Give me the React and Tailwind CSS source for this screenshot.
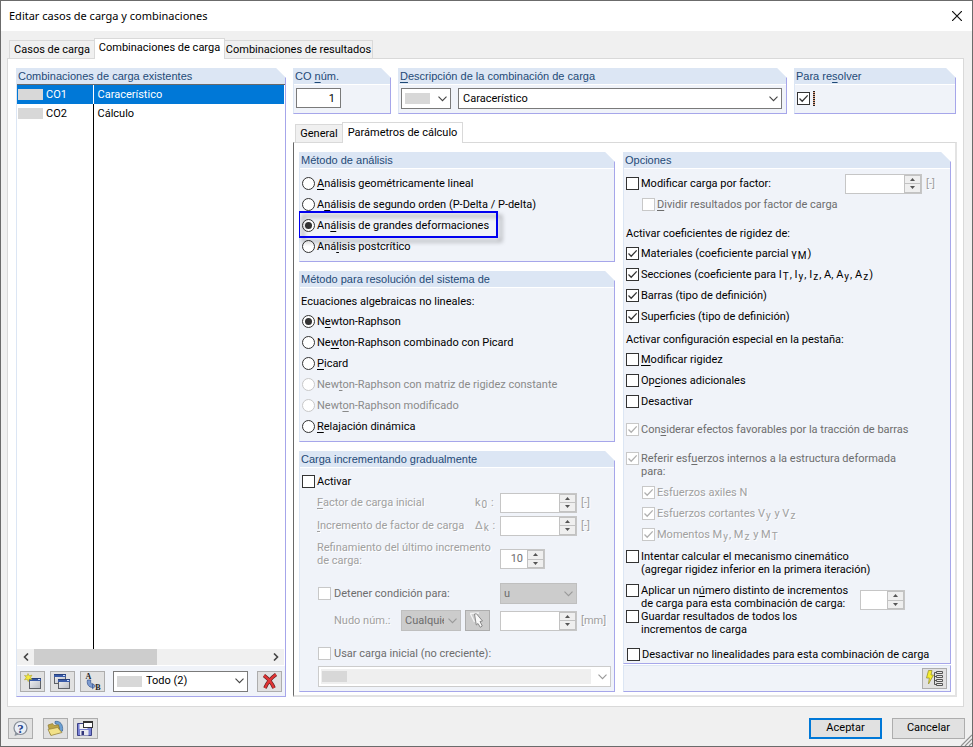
import React from "react";
import clsx from "clsx";

/* "&" before a letter marks its keyboard mnemonic, "_x" sets x as a subscript. */
function Rich({ text }) {
  return text.split(/(&.|_.)/).map((part, i) => {
    if (part.length === 2 && part[0] === "&") return <u key={i} className="underline-offset-2">{part[1]}</u>;
    if (part.length === 2 && part[0] === "_") return <sub key={i} className="relative bottom-auto top-0.5 mx-px align-baseline text-[10px] leading-none">{part[1]}</sub>;
    return <React.Fragment key={i}>{part}</React.Fragment>;
  });
}

function Group({ title, className, bodyClass, children, htmlFor }) {
  return (
    <section
      className={clsx(
        "flex flex-col border-r border-b border-l border-r-[#a6a6ea] border-b-[#a6a6ea] border-l-[#dce6f4] bg-[#f0f3f9]",
        "[clip-path:polygon(0_0,calc(100%-10px)_0,100%_10px,100%_100%,0_100%)]",
        className
      )}
    >
      <h2 className="h-[17px] shrink-0 border-b border-white bg-[#dce6f4] px-px font-['Liberation_Sans',sans-serif] text-[11px] leading-4 whitespace-nowrap text-[#1f4a77]">
        <label htmlFor={htmlFor}><Rich text={title} /></label>
      </h2>
      <div className={clsx("flex flex-1 flex-col", bodyClass)}>{children}</div>
    </section>
  );
}

function Tick({ disabled }) {
  return (
    <svg viewBox="0 0 13 13" className={clsx("pointer-events-none invisible col-start-1 row-start-1 size-[13px] peer-checked:visible", disabled ? "text-[#b0b0b0]" : "text-[#333]")}>
      <path d="M2.5 6.5 5.2 9.2 10.7 3.4" fill="none" stroke="currentColor" strokeWidth="1.3" />
    </svg>
  );
}

function Check({ label, checked, disabled, tone, className, labelClass, ariaLabel, lines }) {
  return (
    <label className={clsx("flex gap-0.5", lines ? "items-start" : "h-[21px] items-center", className)}>
      <span className="grid shrink-0">
        <input
          type="checkbox"
          defaultChecked={checked}
          disabled={disabled}
          aria-label={ariaLabel}
          className="peer col-start-1 row-start-1 size-[13px] appearance-none border border-[#333] bg-white disabled:border-[#c8c8c8]"
        />
        <Tick disabled={disabled} />
      </span>
      {label && (
        <span className={clsx("whitespace-nowrap", tone === "faint" ? "text-[#a0a0a0] [text-shadow:1px_1px_white]" : disabled && "text-[#6d6d6d]", labelClass)}>
          {lines ? lines.map((l) => <span key={l} className="block leading-[13px]"><Rich text={l} /></span>) : <Rich text={label} />}
        </span>
      )}
    </label>
  );
}

function Radio({ name, label, checked, disabled, children }) {
  return (
    <label className={clsx("relative flex h-[21px] items-center gap-0.5", disabled && "text-[#8a8a8a]")}>
      <span className="grid shrink-0 place-items-center">
        <input
          type="radio"
          name={name}
          defaultChecked={checked}
          disabled={disabled}
          className="peer col-start-1 row-start-1 size-[13px] appearance-none rounded-full border border-[#333] bg-white disabled:border-[#c8c8c8]"
        />
        <span className="pointer-events-none invisible col-start-1 row-start-1 size-[7px] rounded-full bg-[#333] peer-checked:visible" />
      </span>
      <span className="whitespace-nowrap"><Rich text={label} /></span>
      {children}
    </label>
  );
}

function Chevron({ className }) {
  return (
    <svg viewBox="0 0 9 6" className={clsx("pointer-events-none col-start-1 row-start-1 mr-1 h-1.5 w-[9px] justify-self-end", className)}>
      <path d="M.5.7 4.5 4.7 8.5.7" fill="none" stroke="currentColor" strokeWidth="1.1" />
    </svg>
  );
}

function Select({ id, label, value, className, selectClass, swatch, tone }) {
  const tones = {
    normal: "border-[#7a7a7a] bg-white",
    gray: "border-[#bfbfbf] bg-[#cccccc] text-[#6d6d6d]",
    off: "border-[#cccccc] bg-white",
  };
  return (
    <div className={clsx("grid items-center", className)}>
      <select
        id={id}
        aria-label={label}
        disabled={tone !== "normal"}
        className={clsx("col-start-1 row-start-1 size-full appearance-none border opacity-100", tones[tone], selectClass)}
      >
        <option>{value}</option>
      </select>
      {tone === "off" && <span className="pointer-events-none col-start-1 row-start-1 mr-5 ml-[3px] h-[15px] bg-[#efefef]" />}
      {swatch && <span className="pointer-events-none col-start-1 row-start-1 ml-1 h-[11px] w-[25px] bg-[#d8d8d8]" />}
      <Chevron className={tone === "normal" ? "text-[#444]" : "text-[#999]"} />
    </div>
  );
}

function Spinner({ label, value, wide }) {
  return (
    <div className={clsx("flex h-5 shrink-0 border border-[#c6c6c6] bg-white", wide ? "w-[77px]" : "w-[45px]")}>
      <input aria-label={label} disabled defaultValue={value} className="w-0 flex-1 bg-white pr-1 text-right text-[#6d6d6d]" />
      <div className="grid w-[17px] grid-rows-2 gap-px bg-[#c2c2c2] p-px">
        <button type="button" disabled aria-label={`${label}: aumentar`} className="grid place-items-center bg-[#efefef]">
          <svg viewBox="0 0 5 3" className="h-[3px] w-[5px]"><path d="M0 3 2.5 0 5 3z" fill="#555" /></svg>
        </button>
        <button type="button" disabled aria-label={`${label}: disminuir`} className="grid place-items-center bg-[#efefef]">
          <svg viewBox="0 0 5 3" className="h-[3px] w-[5px]"><path d="M0 0 2.5 3 5 0z" fill="#555" /></svg>
        </button>
      </div>
    </div>
  );
}

function IconButton({ label, disabled, children }) {
  return (
    <button
      type="button"
      aria-label={label}
      disabled={disabled}
      className={clsx("grid h-[21px] w-[25px] shrink-0 place-items-center border border-[#adadad]", disabled ? "bg-[#cccccc]" : "bg-[#e1e1e1]")}
    >
      <svg viewBox="0 0 17 17" className="size-[17px] overflow-visible">{children}</svg>
    </button>
  );
}

function Pane({ x, y, w, h }) {
  return (
    <g>
      <rect x={x + 0.5} y={y + 0.5} width={w} height={h} fill="url(#pane)" stroke="#5d6066" />
      <rect x={x} y={y} width={w + 1} height="3" fill="#3a5ba8" />
      <rect x={x} y={y} width={w + 1} height="1" fill="#27407c" />
      <rect x={x + w - 2} y={y + 1} width="2" height="1" fill="#cfe0ff" />
    </g>
  );
}

const PaneFill = () => (
  <linearGradient id="pane" x1="0" y1="0" x2="1" y2="1">
    <stop offset="0" stopColor="#f2f2f4" />
    <stop offset="1" stopColor="#b9bcc4" />
  </linearGradient>
);

const NewIcon = () => (
  <>
    <defs><PaneFill /></defs>
    <Pane x={5} y={5} w={11} h={10} />
    <path d="M4 .5 5 2.800 8 2.200 6.500 4.400 8 6.500 5.300 6 4.200 8.500 3.300 6.200.5 6.800 2.200 4.400.5 2.500 3.200 2.900z" fill="#f5ea3c" stroke="#b0a526" strokeWidth=".6" />
  </>
);
const CopyIcon = () => (
  <>
    <Pane x={0} y={1} w={11} h={9} />
    <Pane x={4} y={6} w={11} h={9} />
  </>
);
const RenameIcon = () => (
  <>
    <path d="M3.500 7C2.500 11 4.500 14.500 9 14.500L10 12C7.500 12 6.200 10 6.700 7z" fill="#7d9bd0" stroke="#36558f" strokeWidth=".7" />
    <path d="M8.500 10.500 11.500 13 8.500 15.800z" fill="#7d9bd0" stroke="#36558f" strokeWidth=".7" />
    <text x="1.500" y="6" fontSize="8" fontWeight="700" fontFamily="Liberation Serif, serif" fill="#222">A</text>
    <text x="11.200" y="16.500" fontSize="8" fontWeight="700" fontFamily="Liberation Serif, serif" fill="#222">B</text>
  </>
);
const DeleteIcon = () => (
  <>
    <path d="M3 2.500C7 5.500 11 10 13 15M15 1.500C10 5 6 10 4 15" fill="none" stroke="#5e2424" strokeWidth="3.600" />
    <path d="M3 2.500C7 5.500 11 10 13 15M15 1.500C10 5 6 10 4 15" fill="none" stroke="#e23434" strokeWidth="2.200" />
  </>
);
const HelpIcon = () => (
  <>
    <path d="M3.500 11.500 2.500 16 8 14z" fill="#8c939d" />
    <circle cx="8.500" cy="8" r="6.500" fill="#e9eef6" stroke="#858c96" strokeWidth="1.200" />
    <text x="8.500" y="12.500" textAnchor="middle" fontSize="13" fontWeight="700" fontFamily="Liberation Serif, serif" fill="#24428c">?</text>
  </>
);
const OpenIcon = () => (
  <>
    <path d="M8 1.500C13 .5 16.500 4.500 15.500 11L12.500 12C13 8 11.500 4.500 8 3.500z" fill="#6c9fd2" stroke="#3a618f" strokeWidth=".7" />
    <path d="M1 5 5.500 3.500 7 5.500 11.500 4.800 13 12.500 3.500 15z" fill="#bda546" stroke="#85712a" strokeWidth=".6" />
    <path d="M1 9.500 10.500 7.500 15 12.500 4 15.500z" fill="#f2e188" stroke="#92803a" strokeWidth=".7" />
  </>
);
const SaveIcon = () => (
  <>
    <path d="M.5 3.500H12.500L14.500 5.500V15.500H.5z" fill="#7a82d4" stroke="#3c4186" />
    <rect x="3" y="10" width="8.500" height="5.500" fill="#e8e8ee" />
    <rect x="4.500" y="11" width="2.500" height="4" fill="#33367a" />
    <rect x="2.500" y="4" width="8" height="5" fill="#f2f2f2" />
    <rect x="6.500" y="1.500" width="9" height="6" fill="#fff" stroke="#333" />
    <rect x="6" y="1" width="10" height="2" fill="#333" />
  </>
);
const PickIcon = () => (
  <>
    <path d="M1 1.500 10 1M1.500 2 5.500 10" stroke="#f2f2f2" strokeWidth="1.300" />
    <path d="M5.500 2 7.500 1.800 13.500 9 11 9.500 13.300 14 11.300 15.300 9 11.500 7.300 13z" fill="#fafafa" stroke="#808080" strokeWidth=".9" />
  </>
);
const DetailsIcon = () => (
  <>
    <path d="M2.500 .5H6L5 5H7.500L2.500 14 3.300 8H.5z" fill="#f6ee2c" stroke="#9a9430" strokeWidth=".8" />
    <path d="M10 2.500H8.500V14.500H10M8.500 6.500H10M8.500 10.500H10" fill="none" stroke="#555" />
    <path d="M10.500 1.500H16.500V3.500H10.500zM10.500 5.500H16.500V7.500H10.500zM10.500 9.500H16.500V11.500H10.500zM10.500 13.500H16.500V15.500H10.500z" fill="#e8e8e8" stroke="#555" />
  </>
);

const faint = "whitespace-nowrap text-[#a0a0a0] [text-shadow:1px_1px_white]";
const tabOn = "relative z-10 -mb-px -ml-px border border-b-0 border-[#d9d9d9] bg-white whitespace-nowrap";
const tabOff = "border border-b-0 border-[#d9d9d9] bg-[#f0f0f0] whitespace-nowrap";

function ExistingList() {
  const rows = [["CO1", "Caracerístico", true], ["CO2", "Cálculo", false]];
  return (
    <Group title="Combinaciones de carga existentes" className="w-[270px] shrink-0">
      <div className="-mt-px flex flex-1 flex-col border-t border-[#696969] bg-white pr-px">
        <table className="w-full table-fixed border-collapse text-left">
          <tbody>
            {rows.map(([id, name, active]) => (
              <tr key={id} className={clsx("h-[19px]", active && "bg-[#0078d7] text-white")}>
                <td className="w-[76px] p-0">
                  <span className="flex items-center gap-[3px]">
                    <i className="ml-px h-[11px] w-[25px] bg-[#d8d8d8]" />
                    {id}
                  </span>
                </td>
                <td className={clsx("border-l p-0 pl-1", active ? "border-white" : "border-black")}>{name}</td>
              </tr>
            ))}
          </tbody>
        </table>
        <div className="ml-[76px] flex-1 border-l border-black" />
        <div className="flex h-4 items-center bg-[#f0f0f0]">
          <button type="button" aria-label="Desplazar a la izquierda" className="grid w-[17px] place-items-center">
            <svg viewBox="0 0 6 8" className="h-2 w-1.5"><path d="M5 .5 1.500 4 5 7.500" fill="none" stroke="#444" strokeWidth="1.600" /></svg>
          </button>
          <div className="flex h-full flex-1"><div className="w-[53%] bg-[#cdcdcd]" /></div>
          <button type="button" aria-label="Desplazar a la derecha" className="grid w-[17px] place-items-center">
            <svg viewBox="0 0 6 8" className="h-2 w-1.5"><path d="M1 .5 4.500 4 1 7.500" fill="none" stroke="#444" strokeWidth="1.600" /></svg>
          </button>
        </div>
      </div>
      <div className="flex h-[31px] items-center gap-[5px] border-t border-white pr-[3px] pl-[3px]">
        <IconButton label="Nueva"><NewIcon /></IconButton>
        <IconButton label="Copiar"><CopyIcon /></IconButton>
        <IconButton label="Renumerar"><RenameIcon /></IconButton>
        <Select label="Filtro" value="Todo (2)" tone="normal" swatch className="mr-1 ml-[3px] h-[21px] flex-1" selectClass="pl-8" />
        <IconButton label="Eliminar"><DeleteIcon /></IconButton>
      </div>
    </Group>
  );
}

function LoadIncrement() {
  return (
    <Group title="Carga incrementando gradualmente" className="flex-1" bodyClass="pt-[3px] pr-[3px] pl-0.5">
      <Check label="Activar" />
      <div className={clsx("ml-[15px] flex h-[21px] items-center", faint)}>
        <span className="w-[158px]"><Rich text="&Factor de carga inicial" /></span>
        <span className="w-[25px]"><Rich text="k_0 :" /></span>
        <Spinner label="Factor de carga inicial" wide />
        <span className="ml-1">[-]</span>
      </div>
      <div className={clsx("mt-0.5 ml-[15px] flex h-[21px] items-center", faint)}>
        <span className="w-[158px]"><Rich text="&Incremento de factor de carga" /></span>
        <span className="w-[25px]"><Rich text="Δ_k :" /></span>
        <Spinner label="Incremento de factor de carga" wide />
        <span className="ml-1">[-]</span>
      </div>
      <div className={clsx("mt-[5px] ml-[15px] flex h-[28px]", faint)}>
        <span className="w-[183px] leading-[13px]">Refinamiento del último incremento<br />de carga:</span>
        <div className="self-end"><Spinner label="Refinamiento" value="10" /></div>
      </div>
      <div className="mt-3.5 ml-4 flex h-[21px]">
        <Check label="Detener condición para:" disabled className="w-[182px] gap-[3px]" />
        <Select label="Condición" value="u" tone="gray" className="w-[77px]" selectClass="pl-[3px]" />
      </div>
      <div className={clsx("mt-1.5 ml-8 flex h-[21px] items-center", faint)}>
        <span className="w-[67px]">Nudo núm.:</span>
        <Select label="Nudo" value="Cualquier" tone="gray" className="mr-1 h-[21px] w-[60px]" selectClass="pr-4 pl-[3px]" />
        <IconButton label="Seleccionar nudo" disabled><PickIcon /></IconButton>
        <span className="w-2.5" />
        <Spinner label="Desplazamiento" wide />
        <span className="ml-1">[mm]</span>
      </div>
      <Check label="Usar carga inicial (no creciente):" disabled className="mt-3 ml-4 gap-[3px]" />
      <Select label="Carga inicial" value="" tone="off" swatch className="mt-0.5 ml-4 h-[21px]" />
    </Group>
  );
}

function Options() {
  return (
    <Group title="Opciones" bodyClass="pt-1 pl-0.5" className="flex-1">
      <div className="flex h-[21px] items-center">
        <Check label="Modificar carga por factor:" />
        <span className="flex-1" />
        <Spinner label="Factor" wide />
        <span className={clsx("ml-1 w-6", faint)}>[-]</span>
      </div>
      <Check label="&Dividir resultados por factor de carga" disabled className="ml-4" />
      <p className="mt-2.5 leading-[18px]">Activar coeficientes de rigidez de:</p>
      <Check label="Materiales (coeficiente parcial γ_M)" checked />
      <Check label="Secciones (coeficiente para I_T, I_y, I_z, A, A_y, A_z)" checked />
      <Check label="Barras (tipo de definición)" checked />
      <Check label="Superficies (tipo de definición)" checked />
      <p className="mt-1 leading-[18px]">Activar configuración especial en la pestaña:</p>
      <Check label="&Modificar rigidez" />
      <Check label="Op&ciones adicionales" />
      <Check label="Desactivar" />
      <Check label="Con&siderar efectos favorables por la tracción de barras" checked disabled className="mt-[7px]" />
      <Check label="Referir" lines={["Referir esf&uerzos internos a la estructura deformada", "para:"]} checked disabled className="mt-3" />
      <div className="mt-1 ml-4">
        <Check label="Esfuerzos axiles N" checked disabled tone="faint" />
        <Check label="Esfuerzos cortantes V_y y V_z" checked disabled tone="faint" />
        <Check label="Momentos M_y, M_z y M_T" checked disabled tone="faint" />
      </div>
      <Check label="Intentar" lines={["Intentar calcular el mecanismo cinemático", "(agregar rigidez inferior en la primera iteración)"]} className="mt-[5px]" />
      <div className="mt-2 flex h-[26px]">
        <Check label="Aplicar" lines={["Aplicar un n&úmero distinto de incrementos", "de carga para esta combinación de carga:"]} />
        <span className="flex-1" />
        <div className="self-end"><Spinner label="Incrementos" /></div>
        <span className="w-[45px]" />
      </div>
      <Check label="Guardar" lines={["Guardar resultados de todos los", "incrementos de carga"]} />
      <Check label="Desactivar no linealidades para esta combinación de carga" className="mt-2 -mb-0.5 ml-px" />
    </Group>
  );
}

export default function App() {
  return (
    <div className="relative flex min-h-screen w-full flex-col border border-[#6b6b6b] bg-[#f0f0f0] font-[Roboto,'Liberation_Sans',sans-serif] text-[11px] leading-4 text-black">
      <header className="flex h-[30px] shrink-0 items-center justify-between bg-white pr-2.5 pl-2">
        <h1 className="font-['Noto_Sans',sans-serif] text-[11px]">Editar casos de carga y combinaciones</h1>
        <button type="button" aria-label="Cerrar">
          <svg viewBox="0 0 10 10" className="size-2.5"><path d="M0 0 10 10M10 0 0 10" stroke="#111" strokeWidth="1.200" /></svg>
        </button>
      </header>

      <nav role="tablist" className="mt-[7px] ml-2 flex h-5 shrink-0 items-end">
        <button role="tab" type="button" className={clsx(tabOff, "h-[18px] w-[86px]")}>Casos de carga</button>
        <button role="tab" type="button" aria-selected="true" className={clsx(tabOn, "h-[21px] w-[131px] pb-0.5")}>Combinaciones de carga</button>
        <button role="tab" type="button" className={clsx(tabOff, "-ml-px h-[18px] w-[149px]")}>Combinaciones de resultados</button>
      </nav>

      <main className="mr-2 ml-1.5 flex flex-1 gap-[7px] border border-[#d9d9d9] bg-white pt-[9px] pr-1.5 pb-[9px] pl-2">
        <ExistingList />
        <div className="flex min-w-0 flex-1 flex-col">
          <div className="flex h-[46px] gap-[7px] pr-px">
            <Group title="CO &núm." htmlFor="co-number" className="w-[98px]" bodyClass="pt-[3px] pl-0.5">
              <input id="co-number" defaultValue="1" className="h-5 w-[45px] border border-[#7a7a7a] bg-white pr-[5px] text-right" />
            </Group>
            <Group title="&Descripción de la combinación de carga" htmlFor="co-name" className="flex-1" bodyClass="pt-[3px] pr-1 pl-0.5">
              <div className="flex gap-[7px]">
                <Select label="Color" value="" tone="normal" swatch className="h-[21px] w-[50px]" />
                <Select id="co-name" value="Caracerístico" tone="normal" className="h-[21px] flex-1" selectClass="pl-1" />
              </div>
            </Group>
            <Group title="Para re&solver" className="w-[162px]" bodyClass="pt-[3px] pl-0.5">
              <div className="flex items-center gap-[3px]">
                <Check checked ariaLabel="Para resolver" />
                <span className="h-[15px] w-0.5 bg-[repeating-linear-gradient(#222_0_1px,#e0a080_1px_2px)]" />
              </div>
            </Group>
          </div>

          <nav role="tablist" className="mt-2 ml-0.5 flex h-5 shrink-0 items-end">
            <button role="tab" type="button" className={clsx(tabOff, "h-[18px] w-12")}>General</button>
            <button role="tab" type="button" aria-selected="true" className={clsx(tabOn, "h-[21px] w-[121px]")}>Parámetros de cálculo</button>
          </nav>

          <div className="grid flex-1 grid-cols-[316fr_328fr] gap-2 border-t border-r-2 border-b-2 border-l border-t-[#d9d9d9] border-r-[#e3e3e3] border-b-[#e3e3e3] border-l-[#696969] pt-[9px] pr-1 pb-[3px] pl-[5px]">
            <div className="flex flex-col gap-[9px]">
              <Group title="Método de análisis" bodyClass="py-1 pl-0.5">
                <Radio name="metodo" label="&Análisis geométricamente lineal" />
                <Radio name="metodo" label="A&nálisis de segundo orden (P-Delta / P-delta)" />
                <Radio name="metodo" label="An&álisis de grandes deformaciones" checked>
                  <span className="pointer-events-none absolute -top-1 -left-1 z-10 h-[27px] w-[200px] border-2 border-[#0000f0] drop-shadow-[4px_4px_2px_rgba(0,0,0,0.35)]" />
                </Radio>
                <Radio name="metodo" label="Aná&lisis postcrítico" />
              </Group>
              <Group title="Método para resolución del sistema de" bodyClass="py-1 pl-0.5">
                <p className="-ml-px leading-[19px]">Ecuaciones algebraicas no lineales:</p>
                <Radio name="sistema" label="N&ewton-Raphson" checked />
                <Radio name="sistema" label="Ne&wton-Raphson combinado con Picard" />
                <Radio name="sistema" label="&Picard" />
                <Radio name="sistema" label="New&ton-Raphson con matriz de rigidez constante" disabled />
                <Radio name="sistema" label="Newt&on-Raphson modificado" disabled />
                <Radio name="sistema" label="&Relajación dinámica" />
              </Group>
              <LoadIncrement />
            </div>
            <div className="flex flex-col gap-px">
              <Options />
              <section className="flex h-[27px] items-center justify-end border border-t-[#dce6f4] border-r-[#a6a6ea] border-b-[#a6a6ea] border-l-[#dce6f4] bg-[#f0f3f9] pr-[3px]">
                <IconButton label="Detalles"><DetailsIcon /></IconButton>
              </section>
            </div>
          </div>
        </div>
      </main>

      <footer className="flex h-[39px] shrink-0 items-center px-[7px] pt-[3px]">
        <IconButton label="Ayuda"><HelpIcon /></IconButton>
        <span className="w-2.5" />
        <IconButton label="Abrir"><OpenIcon /></IconButton>
        <span className="w-[5px]" />
        <IconButton label="Guardar"><SaveIcon /></IconButton>
        <span className="flex-1" />
        <button type="button" className="h-[21px] w-[73px] border-2 border-[#0078d7] bg-[#e1e1e1]">Aceptar</button>
        <button type="button" className="ml-2.5 h-[21px] w-[73px] border border-[#adadad] bg-[#e1e1e1]">Cancelar</button>
      </footer>
      <svg viewBox="0 0 12 12" className="absolute right-0 bottom-0 size-3">
        <path d="M1 12 12 1M5 12 12 5M9 12 12 9" stroke="#909090" strokeWidth="1.200" />
      </svg>
    </div>
  );
}
